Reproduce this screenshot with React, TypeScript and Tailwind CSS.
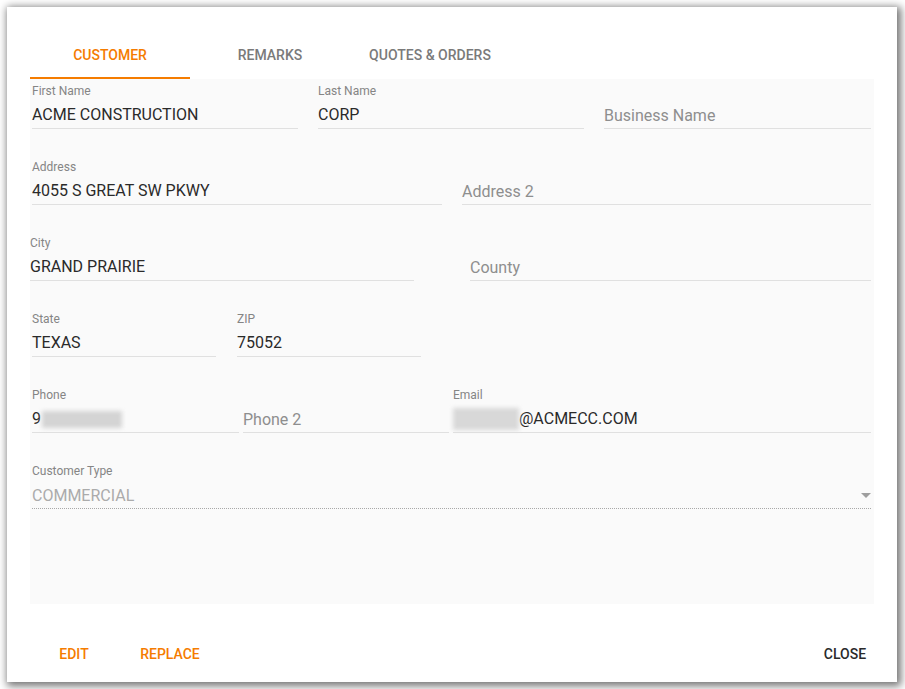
import React from "react";

const ORANGE = "text-[#f57c00]";

function Field({
  label,
  value,
  placeholder,
  className = "",
  children,
  dotted = false,
  disabled = false,
}: {
  label?: string;
  value?: string;
  placeholder?: string;
  className?: string;
  children?: React.ReactNode;
  dotted?: boolean;
  disabled?: boolean;
}) {
  return (
    <div className={"flex flex-col shrink-0 " + className}>
      <div className="mt-[1px] h-[16px] text-[12px] leading-[16px] text-[#858585]">{label ?? ""}</div>
      <div
        className={
          "relative mt-[4px] h-[26px] text-[16px] leading-[24px] " +
          (dotted ? "border-b border-dotted border-[#a8a8a8]" : "border-b border-[#e0e0e0]") +
          (disabled ? " text-[#ababab]" : " text-[#2a2a2a]")
        }
      >
        {children ?? (value ? value : <span className="text-[#8e8e8e] relative top-[1px]">{placeholder}</span>)}
      </div>
    </div>
  );
}

export default function App() {
  return (
    <div className="min-h-[689px] w-[905px] bg-white pt-[7px] pl-[7px] font-['Roboto',sans-serif]">
      <div className="w-[890px] h-[675px] bg-white shadow-[2px_2px_8px_2px_rgba(0,0,0,0.55)] flex flex-col">
        <div className="px-[23px] pt-[24px]">
          <div className="flex h-[48px]">
            <div className={"w-[160px] flex items-center justify-center text-[14px] font-medium uppercase border-b-2 border-[#f57c00] pt-[2px] " + ORANGE}>
              Customer
            </div>
            <div className="w-[160px] flex items-center justify-center text-[14px] font-medium uppercase text-[#7a7a7a]">
              Remarks
            </div>
            <div className="w-[160px] flex items-center justify-center text-[14px] font-medium uppercase text-[#7a7a7a]">
              Quotes &amp; Orders
            </div>
          </div>
          <div className="bg-[#fafafa] h-[525px] pl-[2px] pt-[3px] flex flex-col gap-[29px]">
            <div className="flex">
              <Field label="First Name" value="ACME CONSTRUCTION" className="w-[266px]" />
              <Field label="Last Name" value="CORP" className="w-[266px] ml-[20px]" />
              <Field placeholder="Business Name" className="w-[267px] ml-[20px]" />
            </div>
            <div className="flex">
              <Field label="Address" value="4055 S GREAT SW PKWY" className="w-[410px]" />
              <Field placeholder="Address 2" className="w-[409px] ml-[20px]" />
            </div>
            <div className="flex">
              <Field label="City" value="GRAND PRAIRIE" className="w-[384px] -ml-[2px]" />
              <Field placeholder="County" className="w-[401px] ml-[56px]" />
            </div>
            <div className="flex">
              <Field label="State" value="TEXAS" className="w-[184px]" />
              <Field label="ZIP" value="75052" className="w-[184px] ml-[21px]" />
            </div>
            <div className="flex">
              <Field label="Phone" className="w-[207px]">
                <span className="flex items-center">
                  <span>9</span>
                  <span className="inline-block w-[80px] h-[17px] bg-[#d4d4d4] blur-[2px] ml-[1px]" />
                </span>
              </Field>
              <Field placeholder="Phone 2" className="w-[206px] ml-[4px]" />
              <Field label="Email" className="w-[418px] ml-[4px]">
                <span className="flex items-center">
                  <span className="inline-block w-[66px] h-[22px] bg-[#d8d8d8] blur-[2px]" />
                  <span>@ACMECC.COM</span>
                </span>
              </Field>
            </div>
            <div className="flex">
              <Field label="Customer Type" className="w-[839px]" dotted disabled>
                <span className="relative top-[1px]">COMMERCIAL</span>
                <svg className="absolute right-[0px] top-[10px]" width="10" height="5" viewBox="0 0 10 5">
                  <path d="M0 0 L10 0 L5 5 Z" fill="#9e9e9e" />
                </svg>
              </Field>
            </div>
          </div>
        </div>
        <div className="flex items-center justify-between mt-[32px] pl-[23px] pr-[8px]">
          <div className="flex gap-[8px]">
            <button className={"w-[88px] h-[36px] text-[14px] font-medium uppercase " + ORANGE}>Edit</button>
            <button className={"w-[88px] h-[36px] text-[14px] font-medium uppercase " + ORANGE}>Replace</button>
          </div>
          <button className="w-[88px] h-[36px] text-[14px] font-medium uppercase text-[#2a2a2a]">Close</button>
        </div>
      </div>
    </div>
  );
}
